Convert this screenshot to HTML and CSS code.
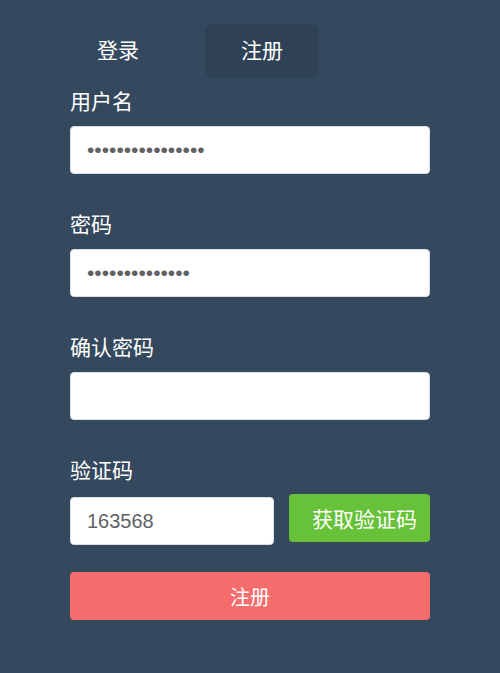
FILE: index.html
```html
<!DOCTYPE html>
<html lang="zh">
<head>
<meta charset="utf-8">
<title>注册</title>
<link rel="stylesheet" href="styles.css">
</head>
<body>
<div class="wrap">
  <div class="tabs">
    <div class="tab">登录</div>
    <div class="tab active">注册</div>
  </div>
  <form class="form">
    <div class="item">
      <label class="label">用户名</label>
      <input class="input pw" type="password" value="1234567890123456">
    </div>
    <div class="item">
      <label class="label">密码</label>
      <input class="input pw" type="password" value="12345678901234">
    </div>
    <div class="item">
      <label class="label">确认密码</label>
      <input class="input pw" type="password" value="">
    </div>
    <div class="item last">
      <label class="label">验证码</label>
      <div class="code-row">
        <input class="input code" type="text" value="163568">
        <button type="button" class="btn green">获取验证码</button>
      </div>
    </div>
    <button type="button" class="btn red submit">注册</button>
  </form>
</div>
</body>
</html>
```

FILE: styles.css
```css
html, body {
  margin: 0;
  padding: 0;
  background: #35495e;
  font-family: "Liberation Sans", "Noto Sans CJK SC", sans-serif;
  color: #fff;
}
.wrap {
  width: 360px;
  margin: 0 auto;
  padding-top: 24px;
}
.tabs {
  display: flex;
  gap: 39px;
  height: 54px;
}
.tab {
  width: 96px;
  height: 54px;
  line-height: 54px;
  text-align: center;
  font-size: 21px;
  border-radius: 8px;
}
.tab.active {
  width: 114px;
  background: #2f4255;
}
.form {
  margin: 4px 0 0;
}
.item {
  margin-bottom: 31px;
}
.item.last {
  margin-bottom: 27px;
}
.label {
  display: block;
  height: 40px;
  line-height: 40px;
  font-size: 21px;
  margin-bottom: 4px;
}
.input {
  display: block;
  box-sizing: border-box;
  width: 360px;
  height: 48px;
  border: 1px solid #dcdfe6;
  border-radius: 4px;
  background: #fff;
  padding: 0 16px;
  font-family: "Liberation Sans", "Noto Sans CJK SC", sans-serif;
  font-size: 20px;
  color: #606266;
  outline: none;
  margin: 0;
}
.input.pw {
  font-size: 21px;
}
.code-row {
  display: flex;
  align-items: flex-start;
  gap: 15px;
  margin-top: -1px;
}
.input.code {
  width: 204px;
  margin-top: 3px;
}
.btn {
  box-sizing: border-box;
  border: none;
  border-radius: 4px;
  color: #fff;
  font-family: "Liberation Sans", "Noto Sans CJK SC", sans-serif;
  font-size: 21px;
  padding: 0;
  margin: 0;
  cursor: pointer;
}
.btn.green {
  width: 141px;
  height: 48px;
  background: #67c23a;
  padding-left: 10px;
}
.btn.red {
  display: block;
  width: 360px;
  height: 48px;
  background: #f56c6c;
  font-size: 20px;
}
```
